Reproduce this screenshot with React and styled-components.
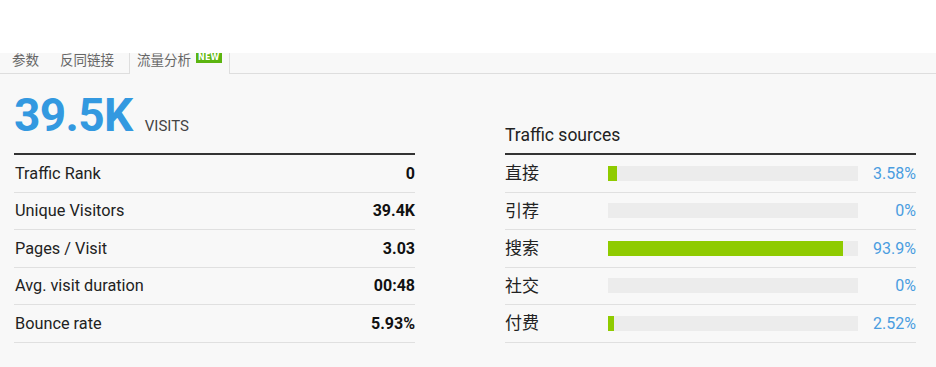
import React from "react";
import styled, { createGlobalStyle } from "styled-components";

const Global = createGlobalStyle`
  html, body { margin: 0; padding: 0; background: #fff; }
  body { font-family: Roboto, "Noto Sans CJK SC", "Liberation Sans", sans-serif; }
  * { box-sizing: border-box; }
`;

const Page = styled.div`
  width: 936px;
  height: 367px;
  overflow: hidden;
  display: flex;
  flex-direction: column;
`;

const TopBlank = styled.div`
  height: 53px;
  background: #fff;
  flex: none;
  position: relative;
  z-index: 1;
`;

const Panel = styled.div`
  flex: 1;
  background: #f8f8f8;
  display: flex;
  flex-direction: column;
`;

const TabBar = styled.div`
  height: 21px;
  display: flex;
  align-items: stretch;
  border-bottom: 1px solid #dedede;
  padding-left: 12px;
`;

const Tab = styled.div`
  display: flex;
  align-items: flex-start;
  gap: 5px;
  font-family: "Noto Sans CJK SC", sans-serif;
  font-size: 13.5px;
  line-height: 13px;
  color: #666;
  padding: 0 ${(p) => (p.$active ? "7px" : "0")};
  margin-right: ${(p) => (p.$active ? "0" : "21px")};
  margin-left: ${(p) => (p.$active ? "-6px" : "0")};
  ${(p) =>
    p.$active &&
    `
    border-left: 1px solid #dedede;
    border-right: 1px solid #dedede;
    background: #f8f8f8;
    margin-bottom: -1px;
  `}
`;

const NewBadge = styled.span`
  display: block;
  background: #5cb510;
  color: #fff;
  font-family: "DejaVu Sans", sans-serif;
  font-size: 8px;
  font-weight: bold;
  line-height: 10px;
  height: 10px;
  padding: 0 2px;
  letter-spacing: 0.2px;
`;

const Content = styled.div`
  display: flex;
  gap: 90px;
  padding: 0 20px 0 14px;
`;

const Column = styled.div`
  width: ${(p) => p.$w}px;
  display: flex;
  flex-direction: column;
`;

const Headline = styled.div`
  height: 81px;
  display: flex;
  align-items: baseline;
  gap: 12px;
  border-bottom: 2px solid #333;
  padding-top: 18px;
`;

const BigNum = styled.span`
  font-size: 46px;
  font-weight: 700;
  color: #3399e0;
  line-height: 46px;
  letter-spacing: -0.6px;
`;

const BigUnit = styled.span`
  font-size: 15px;
  color: #444;
`;

const SectionTitle = styled.div`
  height: 81px;
  display: flex;
  align-items: flex-end;
  border-bottom: 2px solid #333;
  padding-bottom: 8px;
  font-size: 17.5px;
  color: #222;
`;

const Row = styled.div`
  height: 37.5px;
  display: flex;
  align-items: center;
  border-bottom: 1px solid #e0e0e0;
  font-size: 16.3px;
  color: #222;
`;

const Label = styled.span`
  flex: 1;
  padding-left: 1px;
`;

const Value = styled.span`
  font-weight: bold;
  font-size: 16px;
  color: #111;
`;

const SrcLabel = styled.span`
  width: 103px;
  font-family: "Noto Sans CJK SC", sans-serif;
  font-size: 17px;
  line-height: 17px;
  margin-top: -3px;
  color: #222;
`;

const Track = styled.div`
  width: 250px;
  height: 15px;
  background: #ececec;
`;

const Fill = styled.div`
  height: 100%;
  background: #8fcb00;
`;

const Pct = styled.span`
  flex: 1;
  text-align: right;
  color: #4a9de0;
  font-size: 16px;
`;

const stats = [
  ["Traffic Rank", "0"],
  ["Unique Visitors", "39.4K"],
  ["Pages / Visit", "3.03"],
  ["Avg. visit duration", "00:48"],
  ["Bounce rate", "5.93%"],
];

const sources = [
  ["直接", 3.58, "3.58%"],
  ["引荐", 0, "0%"],
  ["搜索", 93.9, "93.9%"],
  ["社交", 0, "0%"],
  ["付费", 2.52, "2.52%"],
];

export default function App() {
  return (
    <Page>
      <Global />
      <TopBlank />
      <Panel>
        <TabBar>
          <Tab>参数</Tab>
          <Tab>反同链接</Tab>
          <Tab $active>
            流量分析<NewBadge>NEW</NewBadge>
          </Tab>
        </TabBar>
        <Content>
          <Column $w={401}>
            <Headline>
              <BigNum>39.5K</BigNum>
              <BigUnit>VISITS</BigUnit>
            </Headline>
            {stats.map(([l, v]) => (
              <Row key={l}>
                <Label>{l}</Label>
                <Value>{v}</Value>
              </Row>
            ))}
          </Column>
          <Column $w={411}>
            <SectionTitle>Traffic sources</SectionTitle>
            {sources.map(([l, p, t]) => (
              <Row key={l}>
                <SrcLabel>{l}</SrcLabel>
                <Track>
                  <Fill style={{ width: `${p}%` }} />
                </Track>
                <Pct>{t}</Pct>
              </Row>
            ))}
          </Column>
        </Content>
      </Panel>
    </Page>
  );
}
